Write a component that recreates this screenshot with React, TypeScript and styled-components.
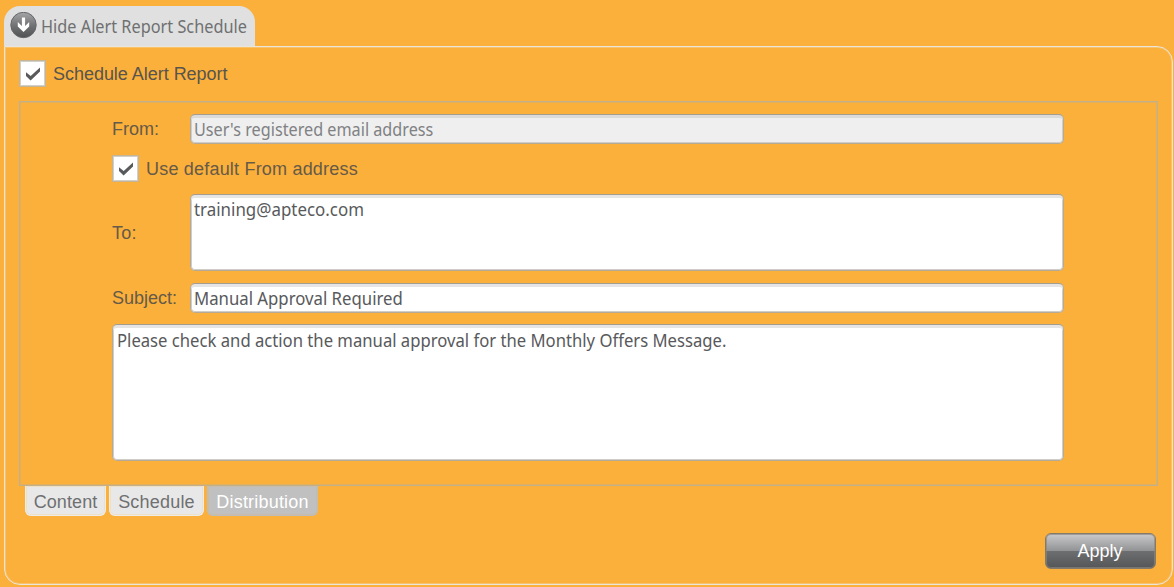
import React from 'react';
import styled, { createGlobalStyle } from 'styled-components';

const Global = createGlobalStyle`
  * { box-sizing: border-box; }
  body { margin: 0; background: #fbb03b; overflow: hidden; font-family: "Liberation Sans", Arial, sans-serif; color: #58544e; }
`;

const humanist = '"Noto Sans", "Open Sans", sans-serif';

const Page = styled.main`
  width: 1174px;
  height: 587px;
  padding: 6px 1px 2px 4px;
  display: flex;
  flex-direction: column;
  align-items: stretch;
`;

const HeaderTab = styled.button`
  align-self: flex-start;
  display: flex;
  align-items: center;
  width: 251px;
  height: 40px;
  padding: 0 0 1px 6px;
  gap: 4px;
  border: 0;
  border-radius: 16px 16px 0 0;
  background: #e0e0e0;
  color: #6f7072;
`;

const Text = styled.span<{ $track?: number }>`
  font-size: 18px;
  letter-spacing: ${p => p.$track ?? 0}px;
  line-height: 24px;
  white-space: nowrap;
`;

const HumanistText = styled.span<{ $stretch: number }>`
  display: block;
  width: max-content;
  font-family: ${humanist};
  font-size: 17.5px;
  line-height: 24px;
  white-space: nowrap;
  transform: scaleX(${p => p.$stretch});
  transform-origin: left center;
`;

const Panel = styled.section`
  flex: 1;
  display: flex;
  flex-direction: column;
  padding: 13px 14px 15px 14px;
  border: 1px solid #ece5da;
  border-radius: 0 16px 16px 16px;
  box-shadow: inset 0 0 0 1px #f3d6a077;
`;

const CheckLabel = styled.label`
  display: flex;
  align-items: center;
  gap: 7px;
  height: 27px;
`;

const Box = styled.span`
  display: grid;
  place-items: center;
  width: 27px;
  height: 27px;
  flex: none;
  border: 1px solid #c5b595;
  background: #fff;
  box-shadow: inset 0 0 0 1px #d2cfca;
`;

const Form = styled.div`
  display: flex;
  flex-direction: column;
  height: 385px;
  margin-top: 14px;
  padding: 12px 93px 0 92px;
  border: 1px solid #c2af8c;
  box-shadow: inset 0 0 0 1px #d3b070aa;
  color: #665a48;
`;

const Row = styled.div<{ $height: number; $gap: number }>`
  display: grid;
  grid-template-columns: 78px 1fr;
  align-items: center;
  height: ${p => p.$height}px;
  margin-bottom: ${p => p.$gap}px;
`;

const Field = styled.div<{ $height: number; $disabled?: boolean }>`
  height: ${p => p.$height}px;
  padding: 2px 0 0 3px;
  border: 1px solid #b5aa96;
  border-top-color: #a39c90;
  border-radius: 5px;
  background: ${p => (p.$disabled ? '#efefef' : '#fff')};
  box-shadow: inset 0 3px 0 ${p => (p.$disabled ? '#dadada' : '#e5e5e5')}, inset 0 0 0 1px #d0cdc8;
  color: ${p => (p.$disabled ? '#808184' : '#58595b')};
`;

const MessageField = styled(Field)`
  padding: 3px 0 0 4px;
`;

const DefaultFrom = styled(CheckLabel)`
  margin-bottom: 12px;
`;

const Tabs = styled.nav`
  display: flex;
  gap: 3px;
  padding-left: 6px;
`;

const Tab = styled.button<{ $width: number; $active?: boolean }>`
  width: ${p => p.$width}px;
  height: 30px;
  padding: 2px 0 0 0;
  border: 1px solid ${p => (p.$active ? '#bdbdbd' : '#ececec')};
  border-top: 0;
  border-radius: 0 0 6px 6px;
  background: ${p => (p.$active ? '#c0c0c0' : '#e8e8e8')};
  box-shadow: inset 0 0 0 1px ${p => (p.$active ? '#c7bba9' : '#efdfc5')};
  color: ${p => (p.$active ? '#fff' : '#6f7072')};
  font-family: inherit;
`;

const Apply = styled.button`
  align-self: flex-end;
  width: 111px;
  height: 36px;
  margin-top: auto;
  margin-right: 2px;
  padding: 0 1px 0 0;
  border: 1px solid #85796a;
  border-radius: 6px;
  background: linear-gradient(#cacacc 0%, #929395 49%, #6d6e70 51%, #555658 100%);
  box-shadow: inset 0 0 0 1px #8a8580aa;
  color: #fff;
  font-family: inherit;
`;

const Check = () => (
  <svg width="16" height="14" viewBox="0 0 16 14">
    <path d="M1 5.2v3.7L5.6 13.4 15 4.4V.6L5.7 9z" fill="#58595b" />
  </svg>
);

const IconHolder = styled.span`
  display: flex;
  flex: none;
`;

const DownIcon = () => (
  <IconHolder>
    <svg width="27" height="27" viewBox="0 0 27 27">
      <defs>
        <linearGradient id="ball" x1="0" y1="0" x2="0" y2="1">
          <stop offset="0" stopColor="#a6a6a8" />
          <stop offset=".5" stopColor="#737476" />
          <stop offset="1" stopColor="#505153" />
        </linearGradient>
      </defs>
      <circle cx="13.5" cy="13" r="12.7" fill="url(#ball)" stroke="#66676a" />
      <path d="M11.9 5.5h3.2v8.6l4.1-4v4.3l-5.7 5.5-5.7-5.5v-4.3l4.1 4z" fill="#fff" />
    </svg>
  </IconHolder>
);

export default function App() {
  return (
    <>
      <Global />
      <Page>
        <HeaderTab>
          <DownIcon />
          <HumanistText $stretch={0.931}>Hide Alert Report Schedule</HumanistText>
        </HeaderTab>
        <Panel>
          <CheckLabel>
            <Box><Check /></Box>
            <Text $track={-0.03}>Schedule Alert Report</Text>
          </CheckLabel>
          <Form>
            <Row $height={30} $gap={11}>
              <Text>From:</Text>
              <Field $height={30} $disabled><HumanistText $stretch={0.926}>User's registered email address</HumanistText></Field>
            </Row>
            <DefaultFrom>
              <Box><Check /></Box>
              <Text $track={0.2}>Use default From address</Text>
            </DefaultFrom>
            <Row $height={77} $gap={12}>
              <Text $track={0.2}>To:</Text>
              <Field $height={77}><HumanistText $stretch={0.966}>training@apteco.com</HumanistText></Field>
            </Row>
            <Row $height={30} $gap={11}>
              <Text>Subject:</Text>
              <Field $height={30}><HumanistText $stretch={0.957}>Manual Approval Required</HumanistText></Field>
            </Row>
            <MessageField $height={137}><HumanistText $stretch={0.952}>Please check and action the manual approval for the Monthly Offers Message.</HumanistText></MessageField>
          </Form>
          <Tabs>
            <Tab $width={81}><Text $track={0.1}>Content</Text></Tab>
            <Tab $width={95}><Text $track={0.2}>Schedule</Text></Tab>
            <Tab $width={111} $active><Text $track={0.2}>Distribution</Text></Tab>
          </Tabs>
          <Apply><Text>Apply</Text></Apply>
        </Panel>
      </Page>
    </>
  );
}
